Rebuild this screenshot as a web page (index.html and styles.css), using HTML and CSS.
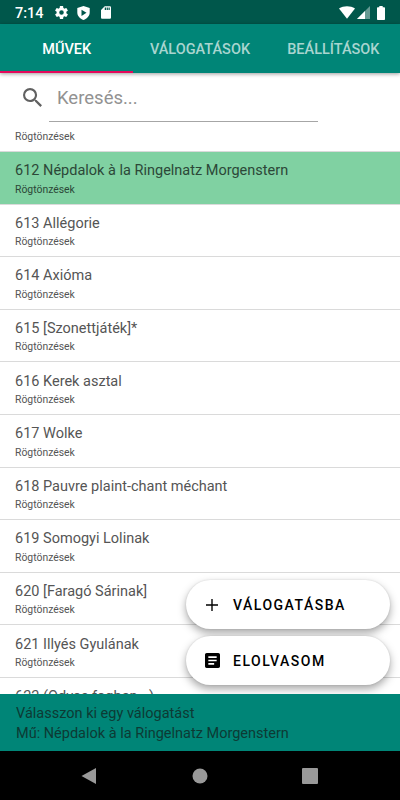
FILE: index.html
```html
<!DOCTYPE html>
<html lang="hu">
<head>
    <meta charset="UTF-8">
    <meta name="viewport" content="width=device-width, initial-scale=1.0">
    <title>Művek</title>
    <link rel="stylesheet" href="styles.css">
</head>
<body>

    <div class="screen">
        <!-- Status bar -->
        <div class="status-bar">
            <span class="clock">7:14</span>
            <svg class="icon-gear" viewBox="2 2 20 20"><path d="M19.43 12.98c.04-.32.07-.64.07-.98s-.03-.66-.07-.98l2.11-1.65c.19-.15.24-.42.12-.64l-2-3.46c-.12-.22-.39-.3-.61-.22l-2.49 1c-.52-.4-1.08-.73-1.69-.98l-.38-2.65C14.46 2.18 14.25 2 14 2h-4c-.25 0-.46.18-.49.42l-.38 2.65c-.61.25-1.17.59-1.69.98l-2.49-1c-.23-.09-.49 0-.61.22l-2 3.46c-.13.22-.07.49.12.64l2.11 1.65c-.04.32-.07.65-.07.98s.03.66.07.98l-2.11 1.65c-.19.15-.24.42-.12.64l2 3.46c.12.22.39.3.61.22l2.49-1c.52.4 1.08.73 1.69.98l.38 2.65c.03.24.24.42.49.42h4c.25 0 .46-.18.49-.42l.38-2.65c.61-.25 1.17-.59 1.69-.98l2.49 1c.23.09.49 0 .61-.22l2-3.46c.12-.22.07-.49-.12-.64l-2.11-1.65zM12 15.500a3.500 3.500 0 1 1 0-7 3.500 3.500 0 0 1 0 7z"/></svg>
            <svg class="icon-shield" viewBox="0 0 13 14"><path fill-rule="evenodd" d="M6.500 0L12.700 2V6.500C12.700 10 10 12.800 6.500 14C3 12.800.3 10 .3 6.500V2zM4.500 3.700V9.900L9.500 6.800z"/></svg>
            <svg class="icon-sd" viewBox="4 2 16 20"><path d="M18 2h-8L4.020 8 4 20c0 1.100.9 2 2 2h12c1.100 0 2-.9 2-2V4c0-1.100-.9-2-2-2zm-6 6h-2V4h2v4zm3 0h-2V4h2v4zm3 0h-2V4h2v4z"/></svg>
            <span class="spacer"></span>
            <svg class="icon-wifi" viewBox="0 0 16 13"><path d="M0 2.600C4.500-.6 11.500-.6 16 2.600L8 12.700z"/></svg>
            <svg class="icon-signal" viewBox="0 0 13 13"><path opacity=".4" d="M13 0V13H0z"/><path d="M8 5V13H0z"/></svg>
            <svg class="icon-battery" viewBox="0 0 8 14"><path d="M2.300 0h3.400v1.300H7.200q.8 0 .8.800V13.200q0 .8-.8.800H.8Q0 14 0 13.200V2.100q0-.8.8-.8h1.500z"/></svg>
        </div>

        <!-- Tabs -->
        <div class="tabs">
            <div class="tab active">MŰVEK</div>
            <div class="tab">VÁLOGATÁSOK</div>
            <div class="tab">BEÁLLÍTÁSOK</div>
        </div>

        <!-- Search -->
        <div class="search">
            <svg class="icon-search" viewBox="3 3 17.500 17.500"><path d="M15.500 14h-.79l-.28-.27A6.471 6.471 0 0 0 16 9.500 6.500 6.500 0 1 0 9.500 16c1.610 0 3.090-.59 4.230-1.570l.27.28v.79l5 4.990L20.490 19l-4.990-5zm-6 0C7.010 14 5 11.990 5 9.500S7.010 5 9.500 5 14 7.010 14 9.500 11.990 14 9.500 14z"/></svg>
            <div class="search-field">Keresés...</div>
        </div>

        <!-- List of works -->
        <div class="list">
            <div class="item partial"><span class="sub">Rögtönzések</span></div>
            <div class="item selected"><span class="title">612 Népdalok à la Ringelnatz Morgenstern</span><span class="sub">Rögtönzések</span></div>
            <div class="item"><span class="title">613 Allégorie</span><span class="sub">Rögtönzések</span></div>
            <div class="item"><span class="title">614 Axióma</span><span class="sub">Rögtönzések</span></div>
            <div class="item"><span class="title">615 [Szonettjáték]*</span><span class="sub">Rögtönzések</span></div>
            <div class="item"><span class="title">616 Kerek asztal</span><span class="sub">Rögtönzések</span></div>
            <div class="item"><span class="title">617 Wolke</span><span class="sub">Rögtönzések</span></div>
            <div class="item"><span class="title">618 Pauvre plaint-chant méchant</span><span class="sub">Rögtönzések</span></div>
            <div class="item"><span class="title">619 Somogyi Lolinak</span><span class="sub">Rögtönzések</span></div>
            <div class="item"><span class="title">620 [Faragó Sárinak]</span><span class="sub">Rögtönzések</span></div>
            <div class="item"><span class="title">621 Illyés Gyulának</span><span class="sub">Rögtönzések</span></div>
            <div class="item"><span class="title">622 (Odvas fogban...)</span></div>

            <!-- Floating buttons -->
            <div class="actions">
                <div class="fab">
                    <svg class="icon-plus" viewBox="5 5 14 14"><path d="M19 12.800h-6.200V19h-1.600v-6.200H5v-1.600h6.200V5h1.600v6.200H19z"/></svg>
                    <span>VÁLOGATÁSBA</span>
                </div>
                <div class="fab">
                    <svg class="icon-article" viewBox="3 3 18 18"><path d="M19 3H5c-1.100 0-2 .9-2 2v14c0 1.100.9 2 2 2h14c1.100 0 2-.9 2-2V5c0-1.100-.9-2-2-2zm-5 14H7v-2h7v2zm3-4H7v-2h10v2zm0-4H7V7h10v2z"/></svg>
                    <span>ELOLVASOM</span>
                </div>
            </div>
        </div>

        <!-- Current selection -->
        <div class="info">
            <div>Válasszon ki egy válogatást</div>
            <div>Mű: Népdalok à la Ringelnatz Morgenstern</div>
        </div>

        <!-- Navigation bar -->
        <div class="nav-bar">
            <svg viewBox="0 0 16 16"><path d="M.5 8L15 0V16z"/></svg>
            <svg viewBox="0 0 16 16"><circle cx="8" cy="8" r="7.500"/></svg>
            <svg viewBox="0 0 16 16"><rect width="16" height="16" rx="1"/></svg>
        </div>
    </div>

</body>
</html>
```
FILE: styles.css
```css
body {
    margin: 0;
    background: #fff;
    font-family: Roboto, "Liberation Sans", sans-serif;
}

.screen {
    display: flex;
    flex-direction: column;
    width: 400px;
    height: 800px;
    overflow: hidden;
}

/* Status bar */
.status-bar {
    display: flex;
    align-items: center;
    flex: none;
    height: 24px;
    padding: 1px 15px 0 15px;
    box-sizing: border-box;
    background: #00574b;
    color: #fff;
    fill: #fff;
}

.clock {
    width: 40px;
    padding-top: 1px;
    font-size: 14.5px;
    font-weight: 500;
}

.spacer {
    flex: 1;
}

.icon-gear {
    width: 13px;
    height: 13px;
}

.icon-shield {
    width: 13px;
    height: 14px;
    margin-left: 9px;
}

.icon-sd {
    width: 10px;
    height: 13px;
    margin-left: 11px;
}

.icon-wifi {
    width: 16px;
    height: 13px;
}

.icon-signal {
    width: 13px;
    height: 13px;
    margin-left: 2px;
}

.icon-battery {
    width: 8px;
    height: 14px;
    margin-left: 7px;
}

/* Tabs */
.tabs {
    display: flex;
    flex: none;
    height: 49px;
    background: #008577;
    box-shadow: 0 1px 4px rgba(0, 0, 0, 0.4);
}

.tab {
    flex: 1;
    box-sizing: border-box;
    padding-top: 1px;
    border-bottom: 2px solid transparent;
    line-height: 49px;
    text-align: center;
    font-size: 14.5px;
    font-weight: 500;
    color: #a9d5d0;
    white-space: nowrap;
}

.tab.active {
    color: #fff;
    border-bottom-color: #e5085c;
}

/* Search */
.search {
    display: flex;
    flex: none;
    height: 50px;
    padding-left: 23px;
}

.icon-search {
    width: 19px;
    height: 19px;
    margin: 15px 7px 0 0;
    fill: #616161;
}

.search-field {
    width: 269px;
    height: 49px;
    box-sizing: border-box;
    padding-left: 8px;
    border-bottom: 1px solid #a6a6a6;
    line-height: 51px;
    font-size: 18.5px;
    color: #929292;
}

/* List */
.list {
    position: relative;
    flex: 1;
    min-height: 0;
    overflow: hidden;
}

.item {
    display: flex;
    flex-direction: column;
    height: 52.6px;
    box-sizing: border-box;
    padding: 9.3px 15px 0;
    border-bottom: 1px solid #dadada;
}

.item.partial {
    height: 29px;
    padding-top: 7px;
}

.item.selected {
    background: #80d1a2;
}

.title {
    line-height: 19px;
    font-size: 14.5px;
    color: #555;
}

.sub {
    line-height: 14px;
    margin-top: 2.4px;
    font-size: 10.4px;
    color: #555;
}

.partial .sub {
    margin-top: 0;
}

.selected .title,
.selected .sub {
    color: #2c4838;
}

/* Buttons floating over the list */
.actions {
    position: absolute;
    right: 10px;
    bottom: 9px;
    display: flex;
    flex-direction: column;
    gap: 7px;
}

.fab {
    display: flex;
    align-items: center;
    width: 204px;
    height: 49px;
    box-sizing: border-box;
    padding-left: 19px;
    border-radius: 25px;
    background: #fff;
    box-shadow: 0 4px 8px rgba(0, 0, 0, 0.35), 0 0 2px rgba(0, 0, 0, 0.12);
    font-size: 14px;
    font-weight: 500;
    letter-spacing: 1.5px;
    color: #000;
}

.icon-plus {
    width: 12px;
    height: 12px;
    margin: 0 15px 0 1px;
}

.icon-article {
    width: 15px;
    height: 15px;
    margin-right: 13px;
}

/* Bottom info */
.info {
    flex: none;
    height: 57px;
    box-sizing: border-box;
    padding: 10px 16px 0;
    background: #008577;
    line-height: 20px;
    font-size: 14.5px;
    color: #0d3a34;
}

/* Navigation bar */
.nav-bar {
    display: flex;
    flex: none;
    justify-content: space-between;
    align-items: center;
    height: 49px;
    box-sizing: border-box;
    padding: 0 82px 0 81px;
    background: #000;
    fill: #999;
}

.nav-bar svg {
    width: 16px;
    height: 16px;
}
```
